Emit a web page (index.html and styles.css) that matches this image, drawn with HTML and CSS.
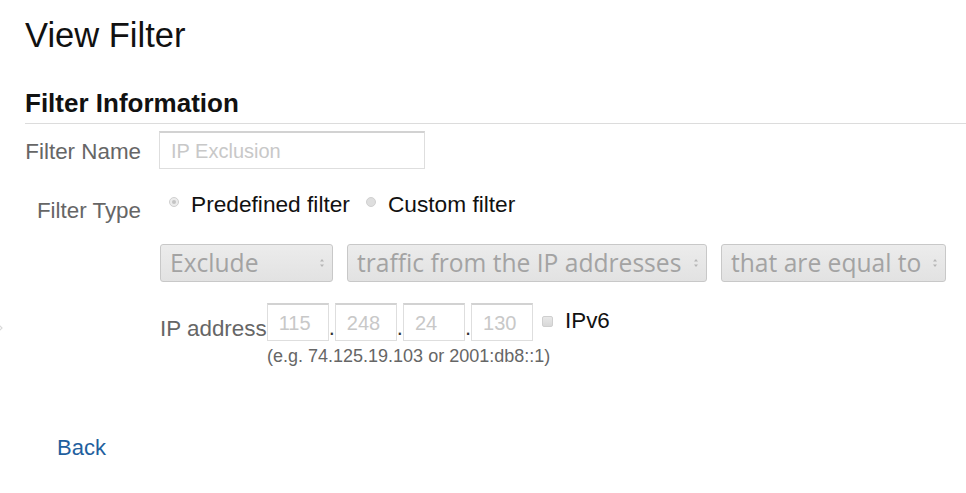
FILE: index.html
```html
<!DOCTYPE html>
<html>
<head>
<meta charset="utf-8">
<link rel="stylesheet" href="styles.css">
</head>
<body>
<div class="page">
  <svg class="edge-mark" width="6" height="12" viewBox="0 0 6 12"><path d="M0 2 L4 6 L0 10" fill="none" stroke="#d8d8d8" stroke-width="1.2"/></svg>
  <h1 class="title">View Filter</h1>
  <h2 class="section">Filter Information</h2>

  <div class="form">
    <div class="row row-name">
      <div class="label label-name">Filter Name</div>
      <div class="field">
        <div class="textbox name-box"><span class="ph">IP Exclusion</span></div>
      </div>
    </div>

    <div class="row row-type">
      <div class="label label-type">Filter Type</div>
      <div class="field radios">
        <span class="radio checked"><span class="dot"></span></span>
        <span class="radio-text">Predefined filter</span>
        <span class="radio"></span>
        <span class="radio-text">Custom filter</span>
      </div>
    </div>

    <div class="row row-selects">
      <div class="label"></div>
      <div class="field selects">
        <div class="select s1"><span>Exclude</span><svg class="arrows" width="6" height="10" viewBox="0 0 6 10"><path d="M3 1 L5 3.5 L1 3.5 Z M3 9 L5 6.5 L1 6.5 Z" fill="#b5b5b5"/></svg></div>
        <div class="select s2"><span>traffic from the IP addresses</span><svg class="arrows" width="6" height="10" viewBox="0 0 6 10"><path d="M3 1 L5 3.5 L1 3.5 Z M3 9 L5 6.5 L1 6.5 Z" fill="#b5b5b5"/></svg></div>
        <div class="select s3"><span>that are equal to</span><svg class="arrows" width="6" height="10" viewBox="0 0 6 10"><path d="M3 1 L5 3.5 L1 3.5 Z M3 9 L5 6.5 L1 6.5 Z" fill="#b5b5b5"/></svg></div>
      </div>
    </div>

    <div class="row row-ip">
      <div class="label"></div>
      <div class="field">
        <div class="ip-line">
          <span class="ip-label">IP address</span>
          <div class="textbox ip-box"><span class="ph">115</span></div>
          <span class="ip-dot">.</span>
          <div class="textbox ip-box"><span class="ph">248</span></div>
          <span class="ip-dot">.</span>
          <div class="textbox ip-box"><span class="ph">24</span></div>
          <span class="ip-dot">.</span>
          <div class="textbox ip-box"><span class="ph">130</span></div>
          <span class="checkbox"></span>
          <span class="ipv6">IPv6</span>
        </div>
        <div class="hint">(e.g. 74.125.19.103 or 2001:db8::1)</div>
      </div>
    </div>
  </div>

  <a class="back" href="#">Back</a>
</div>
</body>
</html>
```

FILE: styles.css
```css
html, body {
  margin: 0;
  padding: 0;
  background: #ffffff;
}

body {
  font-family: "Liberation Sans", Arial, sans-serif;
  color: #222;
}

.page {
  position: relative;
  padding: 15px 0 0 25px;
}

.edge-mark {
  position: absolute;
  left: -2px;
  top: 322px;
}

.title {
  margin: 0;
  font-size: 34.5px;
  line-height: 40px;
  font-weight: normal;
  color: #111;
}

.section {
  margin: 32px 0 0 0;
  padding-bottom: 4px;
  font-size: 26px;
  line-height: 32px;
  font-weight: bold;
  color: #111;
  border-bottom: 1px solid #dcdcdc;
}

.form {
  display: flex;
  flex-direction: column;
}

.row {
  display: grid;
  grid-template-columns: 116px 1fr;
  column-gap: 18px;
}

.label {
  text-align: right;
  font-size: 22.4px;
  line-height: 22px;
  color: #666;
  white-space: nowrap;
}

.row-name {
  margin-top: 7px;
}

.label-name {
  padding-top: 10px;
}

.textbox {
  box-sizing: border-box;
  height: 38px;
  border: 1px solid #dedede;
  border-top: 2px solid #d2d2d2;
  display: flex;
  align-items: center;
  padding-left: 11px;
  background: #fff;
}

.ph {
  font-size: 20px;
  color: #c8c8c8;
  line-height: 20px;
}

.name-box {
  width: 266px;
}

.row-type {
  margin-top: 16px;
}

.label-type {
  padding-top: 15px;
}

.radios {
  display: flex;
  align-items: center;
  height: 38px;
  padding-left: 10px;
}

.radio {
  box-sizing: border-box;
  width: 10px;
  height: 10px;
  border-radius: 50%;
  background: #dedede;
  border: 1px solid #d0d0d0;
  display: flex;
  align-items: center;
  justify-content: center;
  margin-top: -5px;
}

.radio.checked {
  background: #ececec;
}

.radio .dot {
  width: 4px;
  height: 4px;
  border-radius: 50%;
  background: #c4c4c4;
}

.radio-text {
  font-size: 22.7px;
  line-height: 38px;
  color: #111;
  margin-left: 12px;
  margin-right: 16px;
}

.row-selects {
  margin-top: 21px;
}

.selects {
  display: flex;
  gap: 14px;
  padding-left: 1px;
}

.select {
  box-sizing: border-box;
  height: 38px;
  border: 1px solid #c8c8c8;
  border-radius: 3px;
  background: linear-gradient(#ececec, #e2e2e2);
  display: flex;
  align-items: center;
  justify-content: space-between;
  padding: 0 7px 0 9px;
  font-family: "Open Sans", "DejaVu Sans", sans-serif;
  font-size: 24.6px;
  color: #a3a3a3;
  white-space: nowrap;
}

.select span {
  line-height: 30px;
}

.s1 { width: 173px; }
.s2 { width: 360px; }
.s3 { width: 225px; }

.row-ip {
  margin-top: 21px;
}

.ip-line {
  display: flex;
  align-items: flex-start;
  padding-left: 1px;
}

.ip-label {
  font-size: 22.4px;
  line-height: 22px;
  color: #666;
  margin-top: 15px;
}

.ip-box {
  width: 62px;
}

.ip-dot {
  font-size: 22px;
  line-height: 22px;
  color: #333;
  margin-top: 14px;
}

.checkbox {
  box-sizing: border-box;
  width: 11px;
  height: 11px;
  margin: 13px 0 0 9px;
  border: 1px solid #cfcfcf;
  border-radius: 2px;
  background: linear-gradient(#e8e8e8, #d8d8d8);
}

.ipv6 {
  font-size: 22.4px;
  line-height: 22px;
  color: #111;
  margin: 7px 0 0 12px;
}

.hint {
  margin: 4px 0 0 108px;
  font-size: 18px;
  line-height: 22px;
  color: #666;
}

.back {
  display: inline-block;
  margin: 70px 0 0 32px;
  font-size: 22px;
  line-height: 22px;
  color: #1f5f9e;
  text-decoration: none;
}
```
